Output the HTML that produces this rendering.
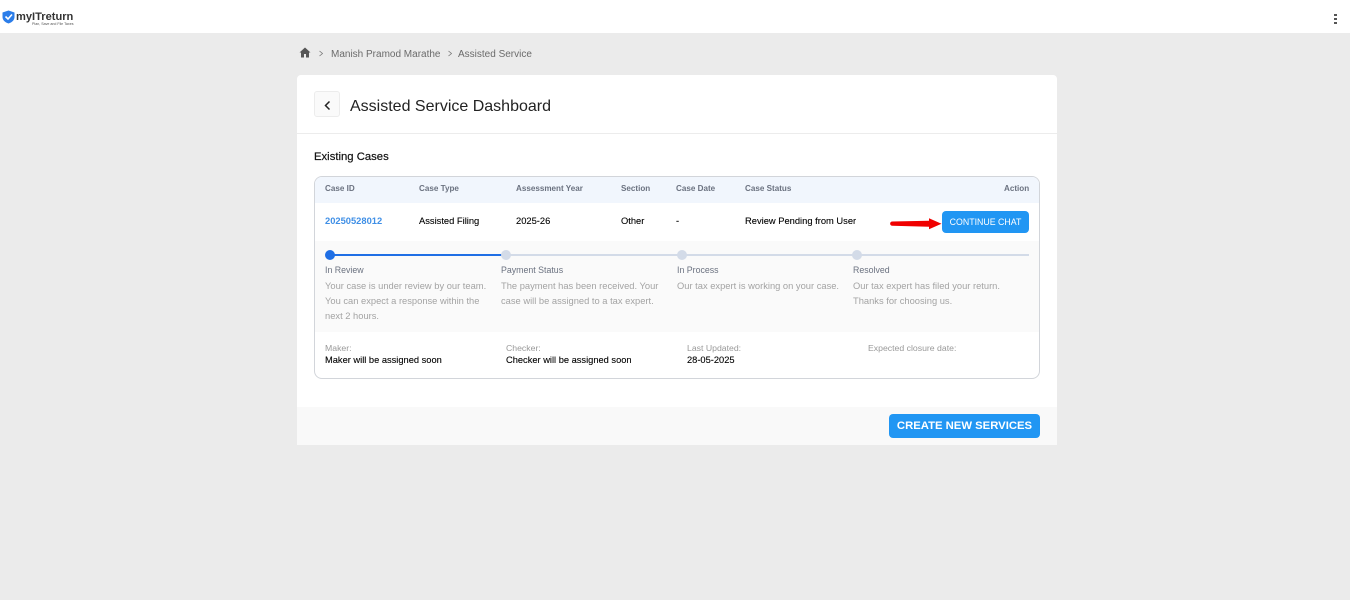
<!DOCTYPE html>
<html><head><meta charset="utf-8">
<style>
*{box-sizing:border-box}
html,body{margin:0;padding:0}
body{width:1350px;height:600px;background:#ebebeb;position:relative;overflow:hidden;font-family:"Liberation Sans",sans-serif;color:#000}
.a{position:absolute;white-space:nowrap}
.h{font-size:8.1px;font-weight:700;color:#6b7280;line-height:12px;top:183px}
.c{font-size:9.35px;line-height:12px;top:215px;color:#000;-webkit-text-stroke:.1px #000}
.l{font-size:8.8px;line-height:12px;color:#6b7280}
.d{font-size:9.35px;line-height:15px;color:#a3a3a3}
.m{font-size:8.7px;line-height:12px;color:#999}
.v{font-size:9.3px;line-height:12px;color:#000;-webkit-text-stroke:.1px #000}
.dot{width:10px;height:10px;border-radius:50%;background:#d3dbe8;top:250px}
</style></head><body>
<div class="a" style="left:0;top:0;width:1350px;height:33px;background:#fff"></div>
<svg class="a" style="left:2px;top:10px" width="13" height="14" viewBox="0 0 13 14"><path d="M6.5 0.5L12.5 2.5V7C12.5 10 10 12.5 6.5 13.5C3 12.5 0.5 10 0.5 7V2.5Z" fill="#2b7de9"/><path d="M3.5 6.5L6 9L10 4.5" fill="none" stroke="#fff" stroke-width="1.6"/></svg>
<div class="a" style="left:16px;top:10px;font-size:11.1px;line-height:14px;font-weight:700;color:#333">myITreturn</div>
<div class="a" style="left:32px;top:22px;font-size:3.6px;line-height:5px;color:#555">Plan, Save and File Taxes</div>
<div class="a" style="left:1334px;top:14px;width:3px;height:2px;background:#555"></div>
<div class="a" style="left:1334px;top:18px;width:3px;height:2px;background:#555"></div>
<div class="a" style="left:1334px;top:22px;width:3px;height:2px;background:#555"></div>

<svg class="a" style="left:299px;top:47px" width="12" height="11" viewBox="0 0 12 11"><path d="M6 0.5L0.5 5.5H2V10.5H5V7H7V10.5H10V5.5H11.5Z" fill="#555"/></svg>
<svg class="a" style="left:318px;top:50px" width="6" height="7" viewBox="0 0 6 7"><path d="M1.5 1L4.5 3.5L1.5 6" fill="none" stroke="#777" stroke-width="0.8"/></svg>
<div class="a" style="left:331px;top:48px;font-size:10px;line-height:13px;color:#6b6b6b">Manish Pramod Marathe</div>
<svg class="a" style="left:447px;top:50px" width="6" height="7" viewBox="0 0 6 7"><path d="M1.5 1L4.5 3.5L1.5 6" fill="none" stroke="#777" stroke-width="0.8"/></svg>
<div class="a" style="left:458px;top:48px;font-size:10px;line-height:13px;color:#6b6b6b">Assisted Service</div>

<div class="a" style="left:297px;top:75px;width:760px;height:370px;background:#fff;border-radius:4px 4px 0 0"></div>
<div class="a" style="left:314px;top:91px;width:26px;height:26px;background:#fafafa;border:1px solid #ececec;border-radius:3px"></div>
<svg class="a" style="left:323px;top:100px" width="9" height="11" viewBox="0 0 9 11"><path d="M6.5 1.5L2.5 5.5L6.5 9.5" fill="none" stroke="#222" stroke-width="1.5"/></svg>
<div class="a" style="left:350px;top:97px;font-size:16px;line-height:20px;color:#222">Assisted Service Dashboard</div>
<div class="a" style="left:297px;top:133px;width:760px;height:1px;background:#ececec"></div>
<div class="a" style="left:314px;top:151px;font-size:11.3px;line-height:13px;color:#111;-webkit-text-stroke:.2px #111">Existing Cases</div>

<div class="a" style="left:314px;top:176px;width:726px;height:203px;border:1px solid #d2d5da;border-radius:8px;background:#fff;overflow:hidden">
<div style="position:absolute;left:0;top:0;width:724px;height:26px;background:#f1f6fd"></div>
<div style="position:absolute;left:0;top:64px;width:724px;height:91px;background:#fafafa"></div>
</div>
<div class="a h" style="left:325px">Case ID</div>
<div class="a h" style="left:419px">Case Type</div>
<div class="a h" style="left:516px">Assessment Year</div>
<div class="a h" style="left:621px">Section</div>
<div class="a h" style="left:676px">Case Date</div>
<div class="a h" style="left:745px">Case Status</div>
<div class="a h" style="left:1004px">Action</div>

<div class="a c" style="left:325px;top:215px;color:#3f8fe6;font-weight:700;-webkit-text-stroke:0">20250528012</div>
<div class="a c" style="left:419px">Assisted Filing</div>
<div class="a c" style="left:516px">2025-26</div>
<div class="a c" style="left:621px">Other</div>
<div class="a c" style="left:676px">-</div>
<div class="a c" style="left:745px">Review Pending from User</div>
<svg class="a" style="left:889px;top:216px" width="54" height="16" viewBox="0 0 54 16"><path d="M3 5.5L40 4.8V2.3L52.5 7.7L40 13.3V10.7L3 9.8C0.5 9.5 0.5 5.8 3 5.5Z" fill="#f00000"/></svg>
<div class="a" style="left:942px;top:211px;width:87px;height:22px;background:#2196f3;border-radius:4px;color:#fff;font-size:8.8px;line-height:22px;text-align:center">CONTINUE CHAT</div>

<div class="a" style="left:330px;top:254px;width:699px;height:2px;background:#d3dbe8"></div>
<div class="a" style="left:330px;top:254px;width:172px;height:2px;background:#1f6fe5"></div>
<div class="a dot" style="left:325px;background:#1f6fe5"></div>
<div class="a dot" style="left:501px"></div>
<div class="a dot" style="left:677px"></div>
<div class="a dot" style="left:852px"></div>
<div class="a l" style="left:325px;top:264px">In Review</div>
<div class="a l" style="left:501px;top:264px">Payment Status</div>
<div class="a l" style="left:677px;top:264px">In Process</div>
<div class="a l" style="left:853px;top:264px">Resolved</div>
<div class="a d" style="left:325px;top:279px">Your case is under review by our team.<br>You can expect a response within the<br>next 2 hours.</div>
<div class="a d" style="left:501px;top:279px">The payment has been received. Your<br>case will be assigned to a tax expert.</div>
<div class="a d" style="left:677px;top:279px">Our tax expert is working on your case.</div>
<div class="a d" style="left:853px;top:279px">Our tax expert has filed your return.<br>Thanks for choosing us.</div>

<div class="a m" style="left:325px;top:342px">Maker:</div>
<div class="a v" style="left:325px;top:354px">Maker will be assigned soon</div>
<div class="a m" style="left:506px;top:342px">Checker:</div>
<div class="a v" style="left:506px;top:354px">Checker will be assigned soon</div>
<div class="a m" style="left:687px;top:342px">Last Updated:</div>
<div class="a v" style="left:687px;top:354px">28-05-2025</div>
<div class="a m" style="left:868px;top:342px">Expected closure date:</div>

<div class="a" style="left:297px;top:407px;width:760px;height:38px;background:#f9f9f9"></div>
<div class="a" style="left:889px;top:414px;width:151px;height:24px;background:#2196f3;border-radius:4px;color:#fff;font-size:11.3px;font-weight:700;line-height:24px;text-align:center">CREATE NEW SERVICES</div>
</body></html>
